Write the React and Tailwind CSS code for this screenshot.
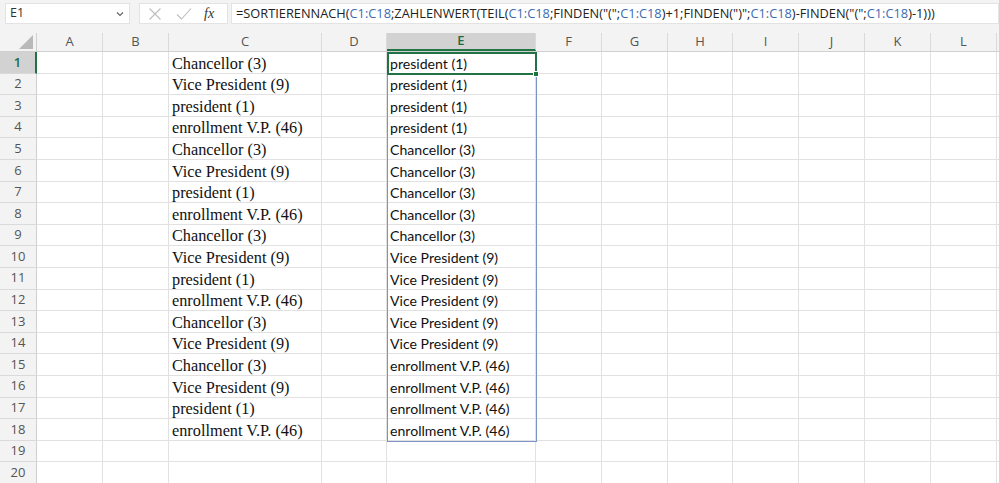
import React from "react";

const cols = ["A","B","C","D","E","F","G","H","I","J","K","L"];
const widths = [66,66,153,65,149,66,66,65,66,66,66,66];
const CH = "Chancellor (3)", VP = "Vice President (9)", PR = "president (1)", EN = "enrollment V.P. (46)";
const cData = [CH,VP,PR,EN,CH,VP,PR,EN,CH,VP,PR,EN,CH,VP,CH,VP,PR,EN];
const eData = [
  ...Array(4).fill(PR),
  ...Array(5).fill(CH),
  ...Array(5).fill(VP),
  ...Array(4).fill(EN),
];

const REF = "text-[#3a6cb3]";

function Formula() {
  const r = <span className={REF}>C1:C18</span>;
  return (
    <span>
      =SORTIERENNACH({r};ZAHLENWERT(TEIL({r};FINDEN("(";{r})+1;FINDEN(")";{r})-FINDEN("(";{r})-1)))
    </span>
  );
}

export default function App() {
  const rows = Array.from({ length: 20 }, (_, i) => i + 1);
  return (
    <div className="w-[999px] h-[483px] overflow-hidden bg-white relative" style={{ fontFamily: '"Open Sans", "Noto Sans", sans-serif' }}>
      {/* Formula bar */}
      <div className="h-[33px] bg-[#f3f3f3] flex items-start pt-[3px] pl-[5px]">
        <div className="w-[125px] h-[21px] bg-white border border-[#e3e3e3] flex items-center justify-between pl-[4px] pr-[5px] text-[12.5px] text-[#333]">
          <span>E1</span>
          <svg width="8" height="6" viewBox="0 0 8 6"><path d="M1 1.5 L4 4.5 L7 1.5" stroke="#666" strokeWidth="1.2" fill="none"/></svg>
        </div>
        <div className="ml-[9px] w-[89px] h-[21px] bg-white border border-[#e3e3e3] flex items-center">
          <svg className="ml-[8px]" width="14" height="14" viewBox="0 0 14 14"><path d="M1.5 1.5 L12.5 12.5 M12.5 1.5 L1.5 12.5" stroke="#bdbdbd" strokeWidth="1.1"/></svg>
          <svg className="ml-[14px]" width="16" height="14" viewBox="0 0 16 14"><path d="M1 7.5 L5.5 12 L15 1.5" stroke="#bdbdbd" strokeWidth="1.1" fill="none"/></svg>
          <span className="ml-[12px] italic text-[14px] text-[#333]" style={{ fontFamily: '"Liberation Serif", serif' }}>fx</span>
        </div>
        <div className="ml-[3px] flex-1 h-[21px] bg-white border border-[#e3e3e3] flex items-center pl-[4px] text-[12.8px] text-[#222] whitespace-nowrap">
          <Formula />
        </div>
      </div>

      {/* Grid */}
      <div className="relative">
        {/* header row */}
        <div className="flex h-[19px] bg-[#f3f3f3] border-b border-[#d0d0d0]">
          <div className="w-[37px] shrink-0 border-r border-[#d0d0d0] relative">
            <svg className="absolute right-[3px] bottom-[2px]" width="14" height="14" viewBox="0 0 14 14"><path d="M14 0 L14 14 L0 14 Z" fill="#b9b9b9"/></svg>
          </div>
          {cols.map((c, i) => (
            <div
              key={c}
              style={{ width: widths[i] }}
              className={
                "shrink-0 flex items-center justify-center text-[13px] border-r border-[#dadada] " +
                (c === "E" ? "bg-[#d2d2d2] text-[#1e6b41] font-semibold border-b-2 border-b-[#217346]" : "text-[#555]")
              }
            >
              {c}
            </div>
          ))}
          <div className="flex-1" />
        </div>
        {rows.map((r) => (
          <div key={r} className="flex h-[21.6px]">
            <div
              className={
                "w-[37px] shrink-0 flex items-center justify-center text-[13px] border-b border-[#dadada] " +
                (r === 1 ? "bg-[#d2d2d2] text-[#1e6b41] font-semibold border-r-2 border-r-[#217346]" : "bg-[#f3f3f3] text-[#555] border-r border-r-[#d0d0d0]")
              }
            >
              {r}
            </div>
            {cols.map((c, i) => (
              <div
                key={c}
                style={{ width: widths[i] }}
                className="shrink-0 border-r border-b border-[#e1e1e1] flex items-end overflow-visible whitespace-nowrap"
              >
                {c === "C" && r <= 18 && (
                  <span className="pl-[3px] text-[16.3px] leading-[19px] text-[#111]" style={{ fontFamily: '"Liberation Serif", serif' }}>
                    {cData[r - 1]}
                  </span>
                )}
                {c === "E" && r <= 18 && (
                  <span className="pl-[3px] text-[14.1px] leading-[19px] text-[#111]" style={{ fontFamily: 'Lato, "Open Sans", sans-serif' }}>
                    {eData[r - 1]}
                  </span>
                )}
              </div>
            ))}
            <div className="flex-1 border-b border-[#e1e1e1]" />
          </div>
        ))}

        {/* spill range border */}
        <div className="absolute left-[387px] top-[19px] w-[150px] h-[389.8px] border border-[#7b93c6] pointer-events-none" />
        {/* active cell */}
        <div className="absolute left-[387px] top-[19px] w-[150px] h-[23.2px] border-2 border-[#217346] pointer-events-none">
          <div className="absolute right-[-4px] bottom-[-4px] w-[6px] h-[6px] bg-[#217346] border border-white" />
        </div>
      </div>
    </div>
  );
}
